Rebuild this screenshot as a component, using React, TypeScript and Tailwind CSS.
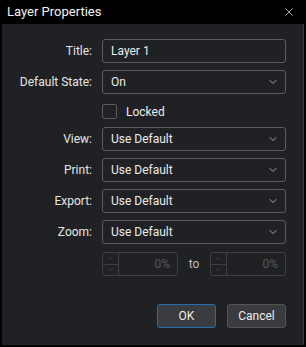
import { X, ChevronDown, ChevronUp } from "lucide-react";

const font = { fontFamily: "Roboto, 'Noto Sans', sans-serif" };

function Label({ children }: { children: React.ReactNode }) {
  return (
    <span className="w-[100px] shrink-0 pr-[10px] text-right text-[12px] text-[#e6e6e6]">
      {children}
    </span>
  );
}

function Select({ value }: { value: string }) {
  return (
    <div className="flex h-[24px] w-[184px] items-center justify-between rounded-[3px] border border-[#5b5c5e] bg-[#202124] pl-[8px] pr-[6px] text-[12px] text-[#ececec]">
      <span>{value}</span>
      <ChevronDown size={12} strokeWidth={1.5} className="text-[#cfcfcf]" />
    </div>
  );
}

function Spinner() {
  return (
    <div className="flex h-[24px] w-[76px] rounded-[3px] border border-[#3e3f41]">
      <div className="flex w-[16px] flex-col border-r border-[#3e3f41]">
        <div className="flex flex-1 items-center justify-center border-b border-[#3e3f41]">
          <ChevronUp size={9} strokeWidth={1.5} className="text-[#56575a]" />
        </div>
        <div className="flex flex-1 items-center justify-center">
          <ChevronDown size={9} strokeWidth={1.5} className="text-[#56575a]" />
        </div>
      </div>
      <div className="flex flex-1 items-center justify-end pr-[7px] text-[12px] text-[#56575a]">
        0%
      </div>
    </div>
  );
}

export default function App() {
  return (
    <div className="flex h-[347px] w-[306px] flex-col bg-black" style={font}>
      <div className="flex h-[24px] items-center justify-between pl-[7px] pr-[10px] text-[13px] text-[#f2f2f2]">
        <span>Layer Properties</span>
        <X size={14} strokeWidth={1.25} className="text-[#d8d8d8]" />
      </div>
      <div className="mb-[2px] ml-[2px] mr-[2px] flex flex-1 flex-col border-r border-[#3a3a3a] bg-[#202124] pt-[15px]">
        <div className="flex items-center">
          <Label>Title:</Label>
          <div className="flex h-[24px] w-[184px] items-center rounded-[3px] border border-[#5b5c5e] pl-[8px] text-[12px] text-[#ececec]">
            Layer 1
          </div>
        </div>
        <div className="mt-[7px] flex items-center">
          <Label>Default State:</Label>
          <Select value="On" />
        </div>
        <div className="mt-[7px] flex h-[19px] items-start pl-[100px]">
          <div className="mt-[3px] h-[15px] w-[15px] rounded-[2px] border border-[#5b5c5e]" />
          <span className="ml-[9px] mt-[2px] text-[12px] text-[#ececec]">Locked</span>
        </div>
        {["View:", "Print:", "Export:", "Zoom:"].map((l) => (
          <div key={l} className="mt-[7px] flex items-center">
            <Label>{l}</Label>
            <Select value="Use Default" />
          </div>
        ))}
        <div className="mt-[8px] flex items-center pl-[100px]">
          <Spinner />
          <span className="w-[32px] text-center text-[12px] text-[#bdbdbd]">to</span>
          <Spinner />
        </div>
        <div className="mt-[28px] flex justify-end gap-[11px] pr-[17px]">
          <button className="h-[24px] w-[59px] rounded-[3px] border border-[#1c6fb5] bg-[#3a3b3e] text-[12px] text-[#ececec]">
            OK
          </button>
          <button className="h-[24px] w-[59px] rounded-[3px] border border-[#545557] bg-[#3a3b3e] text-[12px] text-[#ececec]">
            Cancel
          </button>
        </div>
      </div>
    </div>
  );
}
